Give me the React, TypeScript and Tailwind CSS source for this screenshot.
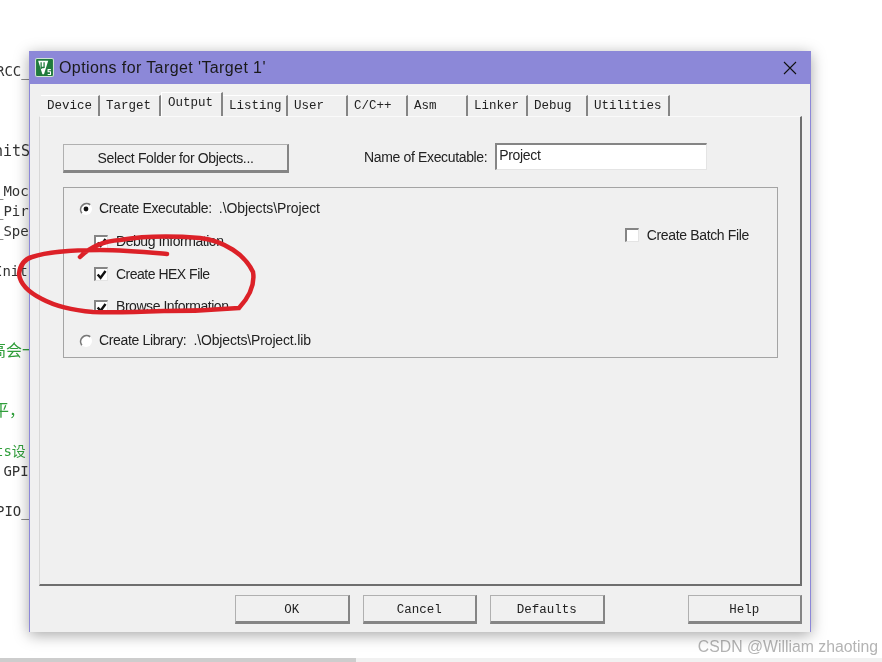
const codeLines = [
  { text: 'RCC_', cls: 'ml-[-4px] text-[#333]' },
  { text: '', cls: '' },
  { text: '', cls: '' },
  { text: '', cls: '' },
  { text: 'nitS', cls: 'ml-[-6px] text-[15px] text-[#333]' },
  { text: '', cls: '' },
  { text: '_Moc', cls: 'ml-[-5px] text-[#333]' },
  { text: '_Pir', cls: 'ml-[-5px] text-[#333]' },
  { text: '_Spe', cls: 'ml-[-5px] text-[#333]' },
  { text: '', cls: '' },
  { text: 'Init', cls: 'ml-[-6px] text-[#333]' },
  { text: '', cls: '' },
  { text: '', cls: '' },
  { text: '', cls: '' },
  { text: '高会一', cls: 'ml-[-10px] text-[16px] text-[#2f9e3a]' },
  { text: '', cls: '' },
  { text: '', cls: '' },
  { text: '平，', cls: 'ml-[-7px] text-[16px] text-[#2f9e3a]' },
  { text: '', cls: '' },
  { text: 'ts设', cls: 'ml-[-5px] text-[#2f9e3a]' },
  { text: ' GPI', cls: 'ml-[-5px] text-[#333]' },
  { text: '', cls: '' },
  { text: 'PIO_', cls: 'ml-[-4px] text-[#333]' },
];

const tabs = [
  { label: 'Device', cls: 'w-[59px]' },
  { label: 'Target', cls: 'w-[61px]' },
  { label: 'Output', cls: 'w-[62px]', active: true },
  { label: 'Listing', cls: 'w-[65px]' },
  { label: 'User', cls: 'w-[60px]' },
  { label: 'C/C++', cls: 'w-[60px]' },
  { label: 'Asm', cls: 'w-[60px]' },
  { label: 'Linker', cls: 'w-[60px]' },
  { label: 'Debug', cls: 'w-[60px]' },
  { label: 'Utilities', cls: 'w-[82px]' },
];

const mono = "font-['Liberation_Mono',monospace]";
const sans = "font-['Liberation_Sans',sans-serif]";

function Check({ checked }: { checked?: boolean }) {
  return (
    <span className="flex h-[14px] w-[14px] shrink-0 items-center justify-center border-t-2 border-l-2 border-r border-b border-t-[#858585] border-l-[#858585] border-r-[#e4e4e4] border-b-[#e4e4e4] bg-white">
      {checked && (
        <svg viewBox="0 0 12 12" className="h-[11px] w-[11px]">
          <path d="M1.8 6l3.2 3.6L10.4 2.2" fill="none" stroke="#111" strokeWidth="2.6" />
        </svg>
      )}
    </span>
  );
}

function Radio({ checked }: { checked?: boolean }) {
  return (
    <svg viewBox="0 0 14 14" className="h-[14px] w-[14px] shrink-0">
      <circle cx="7" cy="7" r="6" fill="#fff" />
      <path d="M2.8 11.2A6 6 0 0 1 11.2 2.8" fill="none" stroke="#777" strokeWidth="1.7" />
      {checked && <circle cx="7" cy="7" r="2.4" fill="#111" />}
    </svg>
  );
}

function DlgButton({ label, cls }: { label: string; cls: string }) {
  return (
    <button
      type="button"
      className={`h-[29px] border-t border-l border-r-2 border-b-[3px] border-t-[#b0b0b0] border-l-[#b0b0b0] border-r-[#858585] border-b-[#858585] bg-[#f0f0f0] pt-[3px] text-[12.5px] leading-none text-[#222] ${mono} ${cls}`}
    >
      {label}
    </button>
  );
}

export default function App() {
  return (
    <div className="relative h-[662px] w-[882px] overflow-hidden bg-white blur-[0.5px]">
      <div className="flex flex-col pt-[61px] font-['DejaVu_Sans_Mono','Noto_Sans_CJK_SC',monospace] text-[14px]">
        {codeLines.map((line, i) => (
          <div key={i} className={`h-5 whitespace-pre leading-5 ${line.cls}`}>
            {line.text}
          </div>
        ))}
      </div>

      <div className="absolute bottom-0 left-0 flex h-[4px] w-full bg-[#f1f1f1]">
        <div className="w-[356px] bg-[#cdcdcd]" />
      </div>

      <div className={`absolute right-[4px] bottom-[5px] text-[15.8px] leading-5 text-[#b4b4b4] ${sans}`}>
        CSDN @William zhaoting
      </div>

      <div className="absolute top-[51px] left-[29px] flex h-[581px] w-[782px] flex-col border-x border-[#8c88d8] bg-[#f0f0f0] shadow-[0_3px_14px_rgba(0,0,0,0.35)]">
        <div className="-mx-px flex h-[33px] shrink-0 items-center bg-[#8c88d8] pr-[14px] pl-[6px]">
          <svg viewBox="0 0 18 18" className="h-[19px] w-[19px] shrink-0">
            <rect x="0.5" y="0.5" width="17" height="17" rx="1.5" fill="#1f7a3c" stroke="#cfe3d4" />
            <path d="M3 2.5h9.5L8.5 15.5h-1.5z" fill="#fff" />
            <path d="M5.8 4v6.5M5.8 9h2.6M8.6 4v5.5" fill="none" stroke="#1f7a3c" strokeWidth="1.2" />
            <path d="M15 11h-2.6v2h2.3v2.6h-2.7" fill="none" stroke="#fff" strokeWidth="1" />
          </svg>
          <span className={`ml-[5px] text-[16px] leading-none tracking-[0.4px] text-[#1a1a1a] ${sans}`}>
            Options for Target 'Target 1'
          </span>
          <svg viewBox="0 0 14 14" className="ml-auto h-[14px] w-[14px]">
            <path d="M1 1l12 12M13 1L1 13" stroke="#111" strokeWidth="1.1" fill="none" />
          </svg>
        </div>

        <div className="flex flex-1 flex-col pt-[8px] pr-[8px] pb-[8px] pl-[9px]">
          <div className="flex h-[24px] shrink-0 items-end pl-[2px]">
            {tabs.map((tab) => (
              <div
                key={tab.label}
                className={`flex items-center border-r-2 border-r-[#858585] text-[12.5px] text-[#222] ${mono} ${tab.cls} ${
                  tab.active
                    ? 'h-[24px] border-t border-l border-t-white border-l-white pb-[2px] pl-[6px]'
                    : 'h-[21px] border-t border-t-white pt-[1px] pl-[6px]'
                }`}
              >
                {tab.label}
              </div>
            ))}
          </div>

          <div className="flex flex-1 flex-col border-t border-l border-r-2 border-b-2 border-t-[#fafafa] border-l-[#d8d8d8] border-r-[#6e6e6e] border-b-[#6e6e6e] pt-[26px] pr-[22px] pl-[23px]">
            <div className="flex h-[31px] items-start">
              <button
                type="button"
                className={`mt-[1px] h-[29px] w-[226px] border-t border-l border-r-2 border-b-[3px] border-t-[#b0b0b0] border-l-[#b0b0b0] border-r-[#858585] border-b-[#858585] bg-[#f0f0f0] text-[14px] leading-none tracking-[-0.35px] text-[#222] ${sans}`}
              >
                Select Folder for Objects...
              </button>
              <span className={`mt-[4px] ml-[75px] text-[14px] leading-5 tracking-[-0.35px] text-[#222] ${sans}`}>
                Name of Executable:
              </span>
              <div
                className={`ml-[8px] h-[27px] w-[212px] border-t-2 border-l-2 border-r border-b border-t-[#858585] border-l-[#858585] border-r-[#e4e4e4] border-b-[#e4e4e4] bg-white pl-[2px] text-[14px] leading-5 tracking-[-0.35px] text-[#222] ${sans}`}
              >
                Project
              </div>
            </div>

            <div className={`mt-[13px] flex h-[171px] justify-between border border-[#a4a4a4] py-[4px] pr-[28px] pl-[15px] text-[14px] tracking-[-0.35px] text-[#222] ${sans}`}>
              <div className="flex flex-col">
                <div className="flex h-[33px] shrink-0 items-center gap-[6px]">
                  <Radio checked />
                  <span>
                    Create Executable:&nbsp; <span className="tracking-[-0.1px]">.\Objects\Project</span>
                  </span>
                </div>
                <div className="flex h-[33px] shrink-0 items-center gap-[8px] pl-[15px]">
                  <Check checked />
                  <span className="tracking-[-0.45px]">Debug Information</span>
                </div>
                <div className="flex h-[32px] shrink-0 items-center gap-[8px] pl-[15px]">
                  <Check checked />
                  <span className="tracking-[-0.5px]">Create HEX File</span>
                </div>
                <div className="flex h-[33px] shrink-0 items-center gap-[8px] pl-[15px]">
                  <Check checked />
                  <span className="tracking-[-0.45px]">Browse Information</span>
                </div>
                <div className="mt-[1px] flex h-[33px] shrink-0 items-center gap-[6px]">
                  <Radio />
                  <span>
                    Create Library:&nbsp; <span className="tracking-[-0.15px]">.\Objects\Project.lib</span>
                  </span>
                </div>
              </div>
              <div className="mt-[33px] flex h-5 items-center gap-[8px]">
                <Check />
                <span>Create Batch File</span>
              </div>
            </div>
          </div>

          <div className="flex h-[38px] shrink-0 items-end pl-[196px]">
            <DlgButton label="OK" cls="w-[115px]" />
            <DlgButton label="Cancel" cls="ml-[13px] w-[115px]" />
            <DlgButton label="Defaults" cls="ml-[13px] w-[115px]" />
            <DlgButton label="Help" cls="ml-[83px] w-[115px]" />
          </div>
        </div>
      </div>

      <svg viewBox="0 0 882 662" className="pointer-events-none absolute inset-0 h-[662px] w-[882px]">
        <path
          d="M80 257C90 247 105 241 120 240C150 235 175 236 200 238C225 241 245 255 253 272C255 284 250 296 239 308C215 310 190 311 167 311C140 312 115 313 93 312C70 310 55 306 42 299C28 292 20 283 19 274C20 265 25 259 32 257C50 251 75 250 100 250C125 250 145 252 167 254"
          fill="none"
          stroke="#dc2128"
          strokeWidth="4.5"
          strokeLinecap="round"
        />
      </svg>
    </div>
  );
}
